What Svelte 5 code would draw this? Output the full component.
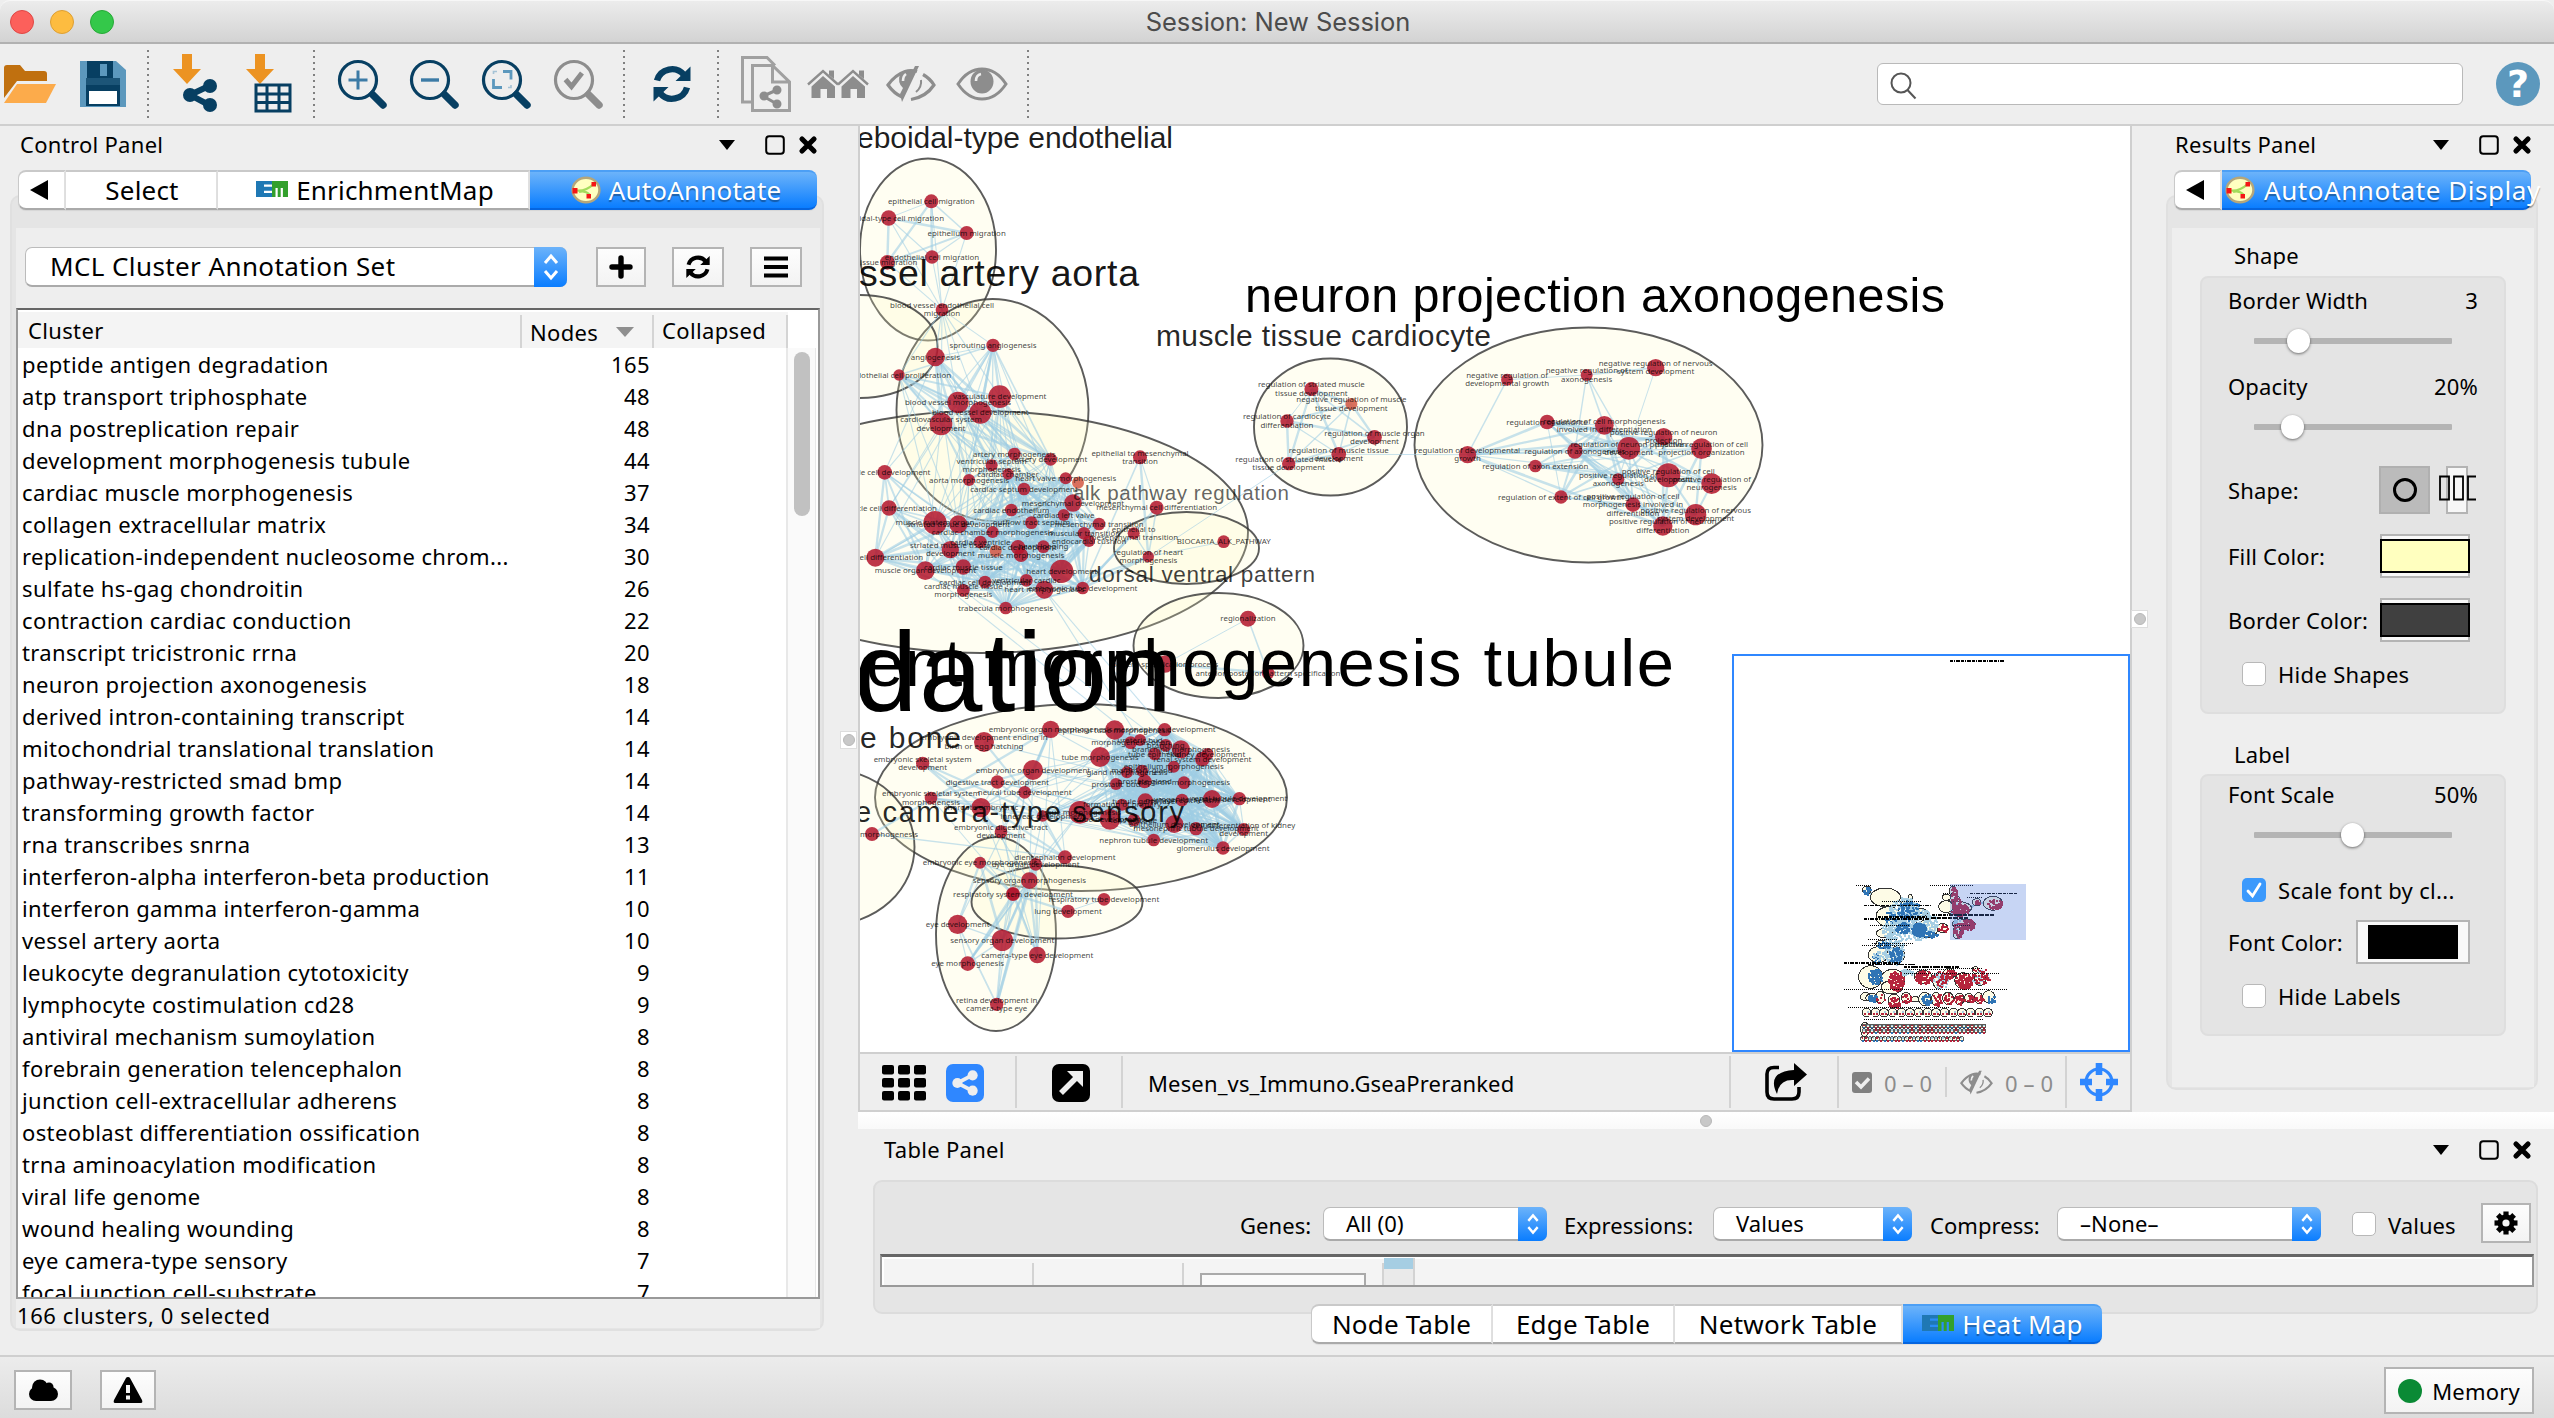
<script>
  const clusters = [
    ['peptide antigen degradation', 165], ['atp transport triphosphate', 48], ['dna postreplication repair', 48],
    ['development morphogenesis tubule', 44], ['cardiac muscle morphogenesis', 37], ['collagen extracellular matrix', 34],
    ['replication-independent nucleosome chrom...', 30], ['sulfate hs-gag chondroitin', 26], ['contraction cardiac conduction', 22],
    ['transcript tricistronic rrna', 20], ['neuron projection axonogenesis', 18], ['derived intron-containing transcript', 14],
    ['mitochondrial translational translation', 14], ['pathway-restricted smad bmp', 14], ['transforming growth factor', 14],
    ['rna transcribes snrna', 13], ['interferon-alpha interferon-beta production', 11], ['interferon gamma interferon-gamma', 10],
    ['vessel artery aorta', 10], ['leukocyte degranulation cytotoxicity', 9], ['lymphocyte costimulation cd28', 9],
    ['antiviral mechanism sumoylation', 8], ['forebrain generation telencephalon', 8], ['junction cell-extracellular adherens', 8],
    ['osteoblast differentiation ossification', 8], ['trna aminoacylation modification', 8], ['viral life genome', 8],
    ['wound healing wounding', 8], ['eye camera-type sensory', 7], ['focal junction cell-substrate', 7]
  ];

  const tools = [
    ['gap', 4], ['folder', 52], ['gap', 20], ['save', 54], ['gap', 16], ['sep', 4], ['gap', 20], ['network', 52], ['gap', 20], ['table', 53],
    ['gap', 17], ['sep', 4], ['gap', 10], ['zoomin', 72], ['zoomout', 72], ['zoomfit', 72], ['zoomsel', 72], ['gap', 8], ['sep', 4],
    ['gap', 2], ['refresh', 88], ['sep', 4], ['gap', 10], ['docs', 72], ['homes', 72], ['hide', 73], ['show', 70], ['gap', 9], ['sep', 4]
  ];

  // Node lists are drawn on tiles: origin plus a per-axis scale.
  const place = (ox, oy, sx, sy, list) => list.map(([x, y, r, ...t]) => ({ x: ox + x / sx, y: oy + y / sy, r: r / 3, t }));
  const tileA = (l) => place(850, 120, 3, 3, l);
  const tileB = (l) => place(850, 580, 3, 3, l);
  const tileC = (l) => place(1130, 240, 2.376, 3, l);

  const migration = tileA([
    [244, 244, 21, 'epithelial cell migration'], [116, 294, 23, 'ameboidal-type cell migration'], [350, 339, 21, 'epithelium migration'],
    [246, 411, 20, 'endothelial cell migration'], [112, 427, 22, 'tissue migration'], [276, 569, 19, 'blood vessel endothelial cell', 'migration']
  ]);
  const vessel = tileA([
    [429, 676, 20, 'sprouting angiogenesis'], [256, 711, 28, 'angiogenesis'], [147, 765, 17, 'endothelial cell proliferation'],
    [324, 847, 32, 'blood vessel morphogenesis'], [449, 830, 34, 'vasculature development'], [391, 878, 33, 'blood vessel development'],
    [273, 912, 34, 'cardiovascular system', 'development'], [493, 1002, 19, 'artery morphogenesis'], [602, 1018, 19, 'artery development'],
    [425, 1036, 18, 'ventricular septum', 'morphogenesis'], [357, 1080, 18, 'aorta morphogenesis']
  ]);
  const heart = tileA([
    [474, 1062, 17, 'cardiac chamber'], [647, 1075, 18, 'heart valve morphogenesis'], [522, 1107, 19, 'cardiac septum development'],
    [669, 1149, 26, 'mesenchymal development'], [484, 1170, 19, 'cardiac endothelium'], [544, 1208, 19, 'outflow tract septum'],
    [641, 1185, 18, 'cardiac left valve'], [747, 1212, 19, 'mesenchymal transition'], [702, 1240, 19, 'muscular transition'],
    [717, 1263, 18, 'endocardial cushion'], [255, 1208, 35, 'muscle system organ'], [325, 1213, 27, 'striated tissue development'],
    [428, 1236, 18, 'cardiac chamber morphogenesis'], [104, 1057, 22, 'muscle cell development'], [117, 1164, 23, 'muscle cell differentiation'],
    [76, 1313, 27, 'muscle cell differentiation'], [391, 1266, 19, 'cardiac ventricle'], [301, 1289, 26, 'striated muscle tissue', 'development'],
    [504, 1282, 22, 'cardiac development'], [580, 1280, 19, 'heart looping'], [513, 1305, 21, 'muscle morphogenesis'],
    [340, 1341, 23, 'cardiac muscle tissue'], [226, 1352, 28, 'muscle organ development'], [635, 1354, 35, 'heart development'],
    [405, 1386, 19, 'cardiac cell development'], [340, 1411, 19, 'cardiac muscle tissue', 'morphogenesis'], [529, 1381, 19, 'ventricular cardiac'],
    [583, 1409, 27, 'heart morphogenesis'], [698, 1404, 19, 'embryonic tube development'], [467, 1464, 19, 'trabecula morphogenesis'],
    [870, 1012, 21, 'epithelial to mesenchymal', 'transition'], [920, 1163, 21, 'mesenchymal cell differentiation'],
    [851, 1240, 18, 'epithelial to', 'mesenchymal transition'], [895, 1310, 17, 'regulation of heart', 'morphogenesis']
  ]);
  const warm = tileA([[684, 1088, 18], [437, 1293, 18]]);
  const alk = tileA([[1121, 1265, 19, 'BIOCARTA_ALK_PATHWAY']]);
  const pattern = tileB([[1194, 116, 24, 'regionalization'], [945, 252, 26, 'pattern specification process'], [1254, 279, 19, 'anterior/posterior pattern specification']]);
  const embryo = tileB([
    [602, 448, 26, 'embryonic organ morphogenesis'], [402, 486, 30, 'embryonic development ending in', 'birth or egg hatching'],
    [218, 550, 20, 'embryonic skeletal system', 'development'], [549, 570, 30, 'embryonic organ development'], [442, 606, 20, 'digestive tract development'],
    [524, 637, 19, 'neural tube development'], [243, 654, 19, 'embryonic skeletal system', 'morphogenesis'], [393, 683, 29, 'chordate embryonic'],
    [453, 755, 19, 'embryonic digestive tract', 'development'], [578, 708, 17, 'inner ear development'], [690, 697, 34, 'tissue morphogenesis'],
    [645, 832, 21, 'diencephalon development'], [66, 762, 21, 'cartilage morphogenesis']
  ]);
  const kidney = tileB([
    [794, 450, 29, 'epithelial tube morphogenesis'], [944, 449, 20, 'mesonephros development'], [842, 488, 19, 'morphogenesis of an'],
    [870, 480, 18, 'ureteric bud'], [947, 496, 19, 'branching'], [993, 508, 27, 'branching morphogenesis'], [914, 522, 19, 'tube epithelial'],
    [750, 531, 30, 'tube morphogenesis'], [1057, 537, 22, 'renal system development'], [1073, 522, 18, 'kidney development'],
    [971, 560, 18, 'epithelium morphogenesis'], [876, 572, 18, 'mammary gland'], [831, 577, 18, 'gland morphogenesis'], [884, 604, 21, 'prostate gland'],
    [798, 612, 18, 'prostatic bud'], [1002, 608, 19, 'nephron morphogenesis'], [816, 674, 18, 'formation of primary'], [886, 664, 24, 'tubule germ layer'],
    [996, 660, 19, 'nephron epithelium'], [1086, 657, 27, 'urogenital system development'], [1168, 656, 20, 'renal tubule development'],
    [780, 718, 31, 'tube development'], [852, 720, 19, 'lens placode'], [973, 732, 27, 'epithelium development'], [1038, 746, 20, 'mesonephric tubule development'],
    [1181, 748, 19, 'cell differentiation of kidney', 'development'], [911, 780, 19, 'nephron tubule development'], [1119, 804, 20, 'glomerulus development']
  ]);
  const eye = tileB([
    [390, 848, 18, 'embryonic eye morphogenesis'], [557, 853, 19, 'eye organ development'], [538, 902, 25, 'sensory organ morphogenesis'],
    [489, 942, 21, 'respiratory system development'], [323, 1033, 29, 'eye development'], [457, 1081, 32, 'sensory organ development'],
    [562, 1125, 25, 'camera-type eye development'], [353, 1151, 22, 'eye morphogenesis'], [440, 1273, 20, 'retina development in', 'camera-type eye']
  ]);
  const lung = tileB([[762, 958, 19, 'respiratory tube development'], [654, 994, 20, 'lung development'], [489, 942, 19]]);
  const muscle = tileC([
    [431, 447, 21, 'regulation of striated muscle', 'tissue development'], [373, 543, 20, 'regulation of cardiocyte', 'differentiation'],
    [581, 592, 22, 'regulation of muscle organ', 'development'], [496, 643, 22, 'regulation of muscle tissue', 'development'],
    [377, 671, 20, 'regulation of striated muscle', 'tissue development']
  ]);
  const warm2 = tileC([[526, 492, 18, 'negative regulation of muscle', 'tissue development']]);
  const neuronSparse = tileC([
    [896, 419, 18, 'negative regulation of', 'developmental growth'], [1085, 405, 18, 'negative regulation of', 'axonogenesis'],
    [1249, 383, 26, 'negative regulation of nervous', 'system development']
  ]);
  const neuron = tileC([
    [991, 546, 22, 'regulation of dendrite'], [1127, 556, 28, 'regulation of cell morphogenesis', 'involved in differentiation'], [1268, 590, 26, 'positive regulation of neuron', 'projection'],
    [1185, 625, 34, 'regulation of neuron projection', 'development'], [1358, 626, 31, 'positive regulation of cell', 'projection organization'],
    [802, 644, 26, 'regulation of developmental', 'growth'], [1057, 633, 23, 'regulation of axonogenesis'], [963, 678, 19, 'regulation of axon extension'],
    [1279, 706, 36, 'positive regulation of cell', 'development'], [1160, 718, 18, 'positive regulation of', 'axonogenesis'], [1382, 731, 31, 'positive regulation of', 'neurogenesis'],
    [1024, 771, 20, 'regulation of extent of cell growth'], [1195, 794, 22, 'positive regulation of cell', 'morphogenesis involved in', 'differentiation'],
    [1344, 824, 32, 'positive regulation of nervous', 'system development'], [1266, 858, 29, 'positive regulation of neuron', 'differentiation']
  ]);

  const noise = (a, b) => { const v = Math.sin(a * 127.1 + b * 311.7) * 43758.5453; return v - Math.floor(v); };
  function mesh(nodes, density, reach = 999) {
    const out = [];
    nodes.forEach((p, i) => nodes.slice(i + 1).forEach((q, j) => {
      const d = Math.hypot(p.x - q.x, p.y - q.y);
      if (d < reach && noise(i + 1, j + 1) < density) out.push({ p, q, w: 1 + noise(j, i) * 1.8 });
    }));
    return out;
  }
  function bridge(a, b, density) {
    const out = [];
    a.forEach((p, i) => b.forEach((q, j) => { if (noise(i + 3, j + 7) < density) out.push({ p, q, w: 1.1 }); }));
    return out;
  }
  const edges = [
    ...mesh(migration.slice(0, 5), 1), ...bridge([migration[5]], [...migration.slice(0, 5), ...vessel.slice(0, 7)], 1),
    ...mesh(vessel, 0.75), ...bridge(vessel, heart.slice(0, 30), 0.17), ...mesh(heart.slice(0, 30), 0.85, 120), ...mesh(heart.slice(28), 0.7),
    ...mesh(pattern, 1), ...mesh(embryo, 0.4), ...mesh(kidney, 0.95), ...bridge(embryo.slice(9, 11), kidney, 0.8), ...bridge(embryo.slice(0, 8), kidney, 0.07),
    ...mesh(eye, 0.7), ...mesh(lung, 1), ...bridge(embryo, eye, 0.12), ...bridge(heart.slice(22, 29), kidney.slice(0, 12), 0.06),
    ...mesh([...muscle, ...warm2], 0.9), ...mesh(neuron, 0.6), { p: muscle[3], q: neuron[5], w: 1 }, { p: muscle[4], q: heart[33], w: 1 },
    { p: alk[0], q: heart[33], w: 1 }, { p: neuronSparse[0], q: neuronSparse[1], w: 1 }, { p: neuronSparse[1], q: neuronSparse[2], w: 1.6 },
    { p: neuronSparse[0], q: neuron[5], w: 1.4 }, { p: neuronSparse[1], q: neuron[1], w: 1.6 }, { p: neuronSparse[1], q: neuron[6], w: 1.4 },
    { p: neuronSparse[1], q: neuron[3], w: 1.4 }, { p: neuronSparse[2], q: neuron[3], w: 1 }
  ];
  const red = [...migration, ...vessel, ...heart, ...alk, ...pattern, ...embryo, ...kidney, ...eye, ...lung, ...muscle, ...neuronSparse, ...neuron];
  const orange = [...warm, ...warm2];

  const rings = [
    [928, 249.5, 68, 91], [992.5, 410, 96, 111], [860, 346.5, 77.5, 51.5], [980.5, 532, 267.5, 121], [1186.5, 548, 72.5, 36],
    [1218.5, 645.5, 85, 52.5], [1081, 797.5, 206, 93.5], [996, 934, 60, 97], [1057, 902, 85.5, 36.5], [830, 847, 84.5, 77.5],
    [1330.5, 427, 76.5, 68.5], [1588.5, 445, 174, 117.5]
  ];
  // Caption: text, x, baseline, size, drawn length, ink strength
  const captions = [
    ['eboidal-type endothelial', 857, 148, 30, 316, 0.88], ['ssel artery aorta', 859, 286, 37.5, 280, 0.92], ['neuron projection axonogenesis', 1245, 312, 48.5, 700, 1],
    ['muscle tissue cardiocyte', 1156, 346, 30, 335, 0.85], ['alk pathway regulation', 1073, 500, 20.5, 216, 0.62], ['dorsal ventral pattern', 1089, 582, 22.5, 226, 0.75],
    ['dation', 854, 711, 114, 318, 1], ['ent morphogenesis tubule', 866, 686, 67, 808, 1], ['e bone', 860, 748, 30, 101, 0.85], ['e camera-type sensory', 855, 822, 29, 329, 0.85]
  ];

  // Overview: blobs are [cx, cy, rx, ry, colour, count]
  const blue = '#2f74b5', crimson = '#b5243c', sky = '#a6cee3';
  const blobs = [
    [440, 753, 12, 14, blue, 14], [550, 815, 45, 45, sky, 140], [580, 850, 70, 50, sky, 260], [565, 810, 36, 30, blue, 60], [510, 830, 20, 16, blue, 18],
    [595, 867, 22, 20, blue, 130], [545, 862, 22, 18, blue, 50], [630, 882, 22, 10, blue, 20], [505, 870, 20, 25, sky, 50], [520, 925, 30, 50, sky, 120],
    [490, 913, 20, 12, blue, 26], [525, 945, 20, 25, blue, 60], [470, 952, 18, 14, blue, 14], [480, 945, 25, 14, sky, 22],
    [464, 1008, 22, 22, blue, 70], [527, 1020, 24, 30, crimson, 80], [560, 995, 22, 8, sky, 26], [610, 1010, 28, 20, crimson, 70], [660, 1020, 22, 26, sky, 36],
    [660, 1015, 20, 24, crimson, 22], [688, 1000, 18, 14, crimson, 34], [730, 1022, 24, 24, crimson, 80], [780, 1010, 26, 20, sky, 22], [780, 1005, 30, 26, crimson, 30],
    [457, 1073, 15, 10, blue, 30], [480, 1075, 12, 14, crimson, 6], [522, 1087, 18, 18, crimson, 24], [558, 1075, 15, 14, crimson, 14], [618, 1077, 15, 18, blue, 26],
    [650, 1077, 15, 18, crimson, 18], [684, 1075, 15, 16, crimson, 16], [718, 1077, 15, 16, crimson, 18], [750, 1075, 12, 12, crimson, 14], [777, 1073, 13, 14, crimson, 14], [812, 1076, 12, 14, blue, 12],
    [705, 830, 14, 40, sky, 20], [700, 755, 10, 16, crimson, 14], [705, 785, 16, 20, crimson, 30], [718, 808, 26, 18, crimson, 90], [770, 788, 10, 10, crimson, 8], [822, 790, 24, 16, crimson, 34],
    [742, 852, 20, 16, crimson, 60], [715, 870, 18, 24, crimson, 34], [668, 864, 14, 12, crimson, 12]
  ];
  const specks = blobs.flatMap(([cx, cy, rx, ry, c, n], b) => Array.from({ length: Math.round(n * 1.5) }, (_, i) => {
    const a = noise(i, b) * 6.283, k = Math.sqrt(noise(b + 50, i));
    return [Math.round((cx + Math.cos(a) * rx * k) / 3) * 3, Math.round((cy + Math.sin(a) * ry * k) / 3) * 3, c];
  }));
  const row = (y, x0, x1, step) => Array.from({ length: Math.floor((x1 - x0) / step) + 1 }, (_, i) => [x0 + i * step, y]);
  const mids = row(1118, 440, 806, 26);
  const smalls = [...row(1158, 432, 796, 12), ...row(1172, 432, 796, 12), ...row(1196, 428, 728, 11)];
  const ovals = [
    [440, 750, 13, 12], [496, 772, 45, 28], [571, 780, 7, 16], [551, 785, 8, 10], [505, 830, 37, 30], [600, 818, 22, 14], [615, 868, 38, 26], [493, 880, 24, 14],
    [485, 912, 18, 12], [475, 944, 30, 24], [527, 945, 27, 25], [452, 1011, 36, 34], [518, 1022, 37, 34], [515, 1042, 32, 20], [609, 1010, 26, 20], [656, 1022, 18, 24], [688, 1000, 18, 16],
    [730, 1022, 26, 24], [780, 1016, 18, 20], [766, 990, 9, 10], [437, 1070, 16, 12], [457, 1073, 20, 12], [481, 1072, 14, 18], [522, 1082, 18, 20], [558, 1073, 14, 16], [586, 1078, 12, 8],
    [614, 1077, 18, 20], [648, 1077, 14, 20], [684, 1075, 16, 18], [718, 1077, 14, 18], [746, 1074, 12, 14], [776, 1074, 13, 16], [806, 1070, 18, 18], [434, 1168, 12, 22],
    [699, 754, 11, 15], [704, 784, 17, 20], [679, 772, 12, 9], [712, 804, 42, 20], [668, 864, 16, 14], [770, 787, 13, 11], [819, 790, 29, 21], [730, 852, 34, 15], [710, 878, 11, 18], [678, 800, 22, 18]
  ];
  const dotted = [
    [408, 736, 453], [630, 736, 760], [486, 784, 604], [668, 760, 700], [740, 772, 790], [450, 856, 566], [700, 856, 750], [444, 898, 530], [456, 910, 580], [426, 916, 560], [552, 1000, 838], [372, 1048, 862],
    [384, 1102, 690], [432, 1138, 790], [700, 985, 790], [560, 988, 700]
  ];
  const heavy = [[432, 796, 632, 3], [432, 837, 630, 6], [474, 831, 620, 4], [636, 824, 710, 5], [632, 834, 745, 5], [710, 825, 822, 5], [750, 759, 890, 3], [372, 968, 540, 5], [445, 974, 585, 4], [553, 981, 716, 4]];
</script>

{#snippet dock()}
  <span class="dock">
    <svg width="16" height="10" viewBox="0 0 16 10"><path d="M0 0h16l-8 10z" /></svg>
    <svg width="20" height="20" viewBox="0 0 20 20"><rect x="1.2" y="1.2" width="17.6" height="17.6" rx="3" fill="none" stroke="#000" stroke-width="2" /></svg>
    <svg width="20" height="20" viewBox="0 0 20 20"><path d="M4 4l12 12M16 4L4 16" stroke="#000" stroke-width="5.2" stroke-linecap="round" /></svg>
  </span>
{/snippet}

{#snippet aaIcon()}
  <svg class="aa" width="30" height="28" viewBox="0 0 30 28">
    <ellipse cx="15" cy="14" rx="13.4" ry="12.2" fill="#ffffc0" stroke="#b5a67a" stroke-width="2.4" />
    <path d="M5 14.500q10 1 17-6M8 16q6-2 11 3" fill="none" stroke="#a4dc5c" stroke-width="2.2" />
    <path d="M1.500 12h5v5.500h-5zM20.500 6h4.500v4.500h-4.500zM15.500 18h4.500v4.500h-4.500z" fill="#f51616" />
  </svg>
{/snippet}

{#snippet emIcon(on)}
  <svg class="em" width="32" height="16" viewBox="0 0 32 16">
    <path d="M0 0h16v16H0z" fill="#1f78b4" /><path d="M16 0h16v16H16z" fill="#33a02c" />
    <path d="M8 4.600h8M8 10.800h8M20.600 16V7M25.800 16V7" stroke={on ? '#2a8df5' : '#fff'} stroke-width="2.200" />
  </svg>
{/snippet}

{#snippet sync(w, c)}
  <svg width={w} height={w} viewBox="0 0 38 38" fill="none" stroke={c} stroke-width="6.400">
    <path d="M4 15.500A15.500 15.500 0 0 1 31 10" /><path d="M34 22.500A15.500 15.500 0 0 1 7 28" />
    <path d="M37.500 1.500V16H22.500zM.5 36.500V22H15.500z" fill={c} stroke="none" />
  </svg>
{/snippet}

{#snippet eyeOff(w)}
  <svg width={w} height={w * 0.76} viewBox="0 0 50 38" fill="none" stroke="#8d8d8d" stroke-width="3.200">
    <path d="M31 6.500Q25 4.500 19 6.500Q9 10 2 20Q8 28.500 16 32M37 9.500Q44 13.500 48 20Q40 32 25 34.500" />
    <path d="M33 1L16 37l-2-8 3-6Q11 18 14 9q4-4 13-4l2-4z" fill="#8d8d8d" stroke="none" /><path d="M35 15q1 7-5 12" stroke-width="2" /><path d="M20 9q-3 2-3 7" stroke="#eee" stroke-width="2.600" />
  </svg>
{/snippet}

{#snippet share(w, c)}
  <svg width={w} height={w} viewBox="0 0 34 34" fill={c} stroke={c}><path d="M28 6L7 17l21 11" fill="none" stroke-width="5" /><circle cx="27" cy="7" r="6.600" stroke="none" /><circle cx="7" cy="17" r="6.600" stroke="none" /><circle cx="27" cy="27" r="6.600" stroke="none" /></svg>
{/snippet}

{#snippet lens(c, inner, kind)}
  <svg width="50" height="50" viewBox="0 0 50 50" fill="none">
    <circle cx="21" cy="21" r="18.500" stroke={c} stroke-width="3.200" /><path d="M36 36l10 10" stroke={c} stroke-width="7.400" stroke-linecap="round" /><path d="M33 33l4 4" stroke={c} stroke-width="4" />
    {#if kind === 'in'}<path d="M21 11.500v19M11.500 21h19" stroke={inner} stroke-width="3" />{/if}
    {#if kind === 'out'}<path d="M12 21h18" stroke={inner} stroke-width="3.400" />{/if}
    {#if kind === 'fit'}<path d="M22 12.500h8v8M12.500 20v8.500H21" stroke={inner} stroke-width="2.800" /><path d="M16 12.500h-3.500V15M30 26v2.500h-3" stroke={inner} stroke-width="1.600" opacity=".5" />{/if}
    {#if kind === 'sel'}<path d="M12.500 20.500l6 7L29 14" stroke={inner} stroke-width="5" />{/if}
  </svg>
{/snippet}

{#snippet combo(text, cls)}
  <div class="combo {cls}"><span>{text}</span><i><svg width="16" height="26" viewBox="0 0 16 26" fill="none" stroke="#fff" stroke-width="3"><path d="M2 9l6-7 6 7M2 17l6 7 6-7" /></svg></i></div>
{/snippet}

{#snippet slider(pos)}
  <div class="slider"><b style:left="{pos}px"></b></div>
{/snippet}

<div class="window">
  <header><span class="light r"></span><span class="light y"></span><span class="light g"></span><h1>Session: New Session</h1></header>

  <div class="toolbar">
    {#each tools as [kind, w]}
      <span class="tool" style:width="{w}px">
        {#if kind === 'sep'}<span class="dots"></span>
        {:else if kind === 'folder'}
          <svg width="52" height="40" viewBox="0 0 52 40"><path d="M0 34V4q0-3 3-3h13l5 6h19q3 0 3 3v7H13z" fill="#c0700f" /><path d="M0 39l13-19h39L42 39z" fill="#fcab4b" /></svg>
        {:else if kind === 'save'}
          <svg width="46" height="46" viewBox="0 0 46 46"><path d="M0 0h36l10 9v37H0z" fill="#5c98bd" /><path d="M7 0h26v17H7zM6 24h34v21H6z" fill="#073f62" /><path d="M20 3h7v12h-7z" fill="#5c98bd" /><path d="M0 17h46v7H0z" fill="#073f62" opacity=".75" /><path d="M0 17h6v7H0zM40 17h6v7h-6z" fill="#5c98bd" /><path d="M9 30h28v13H9z" fill="#fff" /></svg>
        {:else if kind === 'network' || kind === 'table'}
          <svg width="46" height="60" viewBox="0 0 46 60"><path d="M9 0h10v15h9L14 30 0 15h9z" fill="#ec9322" />
            {#if kind === 'network'}<g fill="#073f62" stroke="#073f62"><path d="M38 31L17 41l21 11" fill="none" stroke-width="6" /><circle cx="37" cy="32" r="7" stroke="none" /><circle cx="17" cy="41" r="7" stroke="none" /><circle cx="37" cy="51" r="7" stroke="none" /></g>
            {:else}<path d="M10 31h34v26H10zM10 40h34M10 48.500h34M21 31v26M33 31v26" fill="none" stroke="#073f62" stroke-width="3" />{/if}
          </svg>
        {:else if kind === 'zoomin'}{@render lens('#073f62', '#3c7ba6', 'in')}
        {:else if kind === 'zoomout'}{@render lens('#073f62', '#3c7ba6', 'out')}
        {:else if kind === 'zoomfit'}{@render lens('#073f62', '#5c98bd', 'fit')}
        {:else if kind === 'zoomsel'}{@render lens('#8d8d8d', '#8d8d8d', 'sel')}
        {:else if kind === 'refresh'}{@render sync(38, '#073f62')}
        {:else if kind === 'docs'}
          <svg width="50" height="56" viewBox="0 0 50 56" fill="none" stroke="#a0a0a0" stroke-width="3"><path d="M11 46H1.500V1.500H26l8 8" /><path d="M11.500 9.500h20L48.500 26v28.500h-37zM31.500 9.500V26h17" /><g stroke="#8d8d8d" fill="#8d8d8d"><path d="M36 34l-14 6 14 8" fill="none" /><circle cx="36" cy="34" r="3" /><circle cx="23" cy="40" r="3" /><circle cx="36" cy="48" r="3" /></g></svg>
        {:else if kind === 'homes'}
          <svg width="62" height="30" viewBox="0 0 62 30" fill="#8d8d8d">
            {#each [0, 30] as x}<g transform="translate({x} 0)"><path d="M4.500 17.500L16 7l12 10.500V29h-8v-9h-6.500v9h-9zM22 1.500h5V10l-5-4z" /><path d="M1 15.500L16 2l15 13.500" fill="none" stroke="#8d8d8d" stroke-width="2.400" /></g>{/each}
          </svg>
        {:else if kind === 'hide'}{@render eyeOff(50)}
        {:else if kind === 'show'}
          <svg width="52" height="34" viewBox="0 0 52 34" fill="none" stroke="#8d8d8d" stroke-width="3"><path d="M2 17Q12 2 26 2t24 15Q40 32 26 32T2 17z" /><ellipse cx="26" cy="14.500" rx="11.500" ry="12" fill="#8d8d8d" stroke="none" /><path d="M20 14q0-6 5-7" stroke="#eee" stroke-width="2.600" /></svg>
        {/if}
      </span>
    {/each}
    <div class="search"><svg width="28" height="28" viewBox="0 0 28 28" fill="none" stroke="#555" stroke-width="2"><circle cx="11" cy="11" r="9.500" /><path d="M17.500 18l8 8.500" /></svg></div>
    <span class="help">?</span>
  </div>

  <main>
    <section class="control">
      <div class="ptitle">Control Panel{@render dock()}</div>
      <div class="frame">
        <div class="tabs">
          <span class="back"><svg width="18" height="20" viewBox="0 0 18 20"><path d="M18 0v20L0 10z" /></svg></span>
          <span class="t1">Select</span><span class="t2">{@render emIcon(false)}EnrichmentMap</span><span class="t3 on">{@render aaIcon()}AutoAnnotate</span>
        </div>
        <div class="content">
          <div class="picker">
            {@render combo('MCL Cluster Annotation Set', 'big')}
            <button class="b1"><svg width="22" height="22" viewBox="0 0 22 22"><path d="M11 2v18M2 11h18" stroke="#000" stroke-width="5.400" stroke-linecap="round" /></svg></button>
            <button class="b2">{@render sync(24, '#000')}</button>
            <button class="b3"><svg width="24" height="22" viewBox="0 0 24 22"><path d="M0 2.500h24M0 11h24M0 19.500h24" stroke="#000" stroke-width="3.800" /></svg></button>
          </div>
          <div class="grid">
            <div class="ghead"><span class="c1">Cluster</span><span class="c2">Nodes<svg width="18" height="10" viewBox="0 0 18 10"><path d="M0 0h18L9 10z" fill="#8f8f8f" /></svg></span><span class="c3">Collapsed</span></div>
            <div class="gbody">
              <div class="rows">{#each clusters as [name, n]}<div class="row"><span>{name}</span><em>{n}</em></div>{/each}</div>
              <div class="track"><div class="thumb"></div></div>
            </div>
          </div>
          <div class="status">166 clusters, 0 selected</div>
        </div>
      </div>
      <span class="grip left"><i></i></span>
    </section>

    <section class="work">
      <div class="upper">
        <div class="view">
          <div class="canvas">
            <svg width="1271" height="926" viewBox="860 126 1271 926">
              {#each rings as [cx, cy, rx, ry]}<ellipse {cx} {cy} {rx} {ry} fill="#fefbc0" fill-opacity=".2" stroke="#333" stroke-width="1.900" stroke-opacity=".8" />{/each}
              <g stroke="#9fcde4" stroke-opacity=".58">{#each edges as { p, q, w }}<line x1={p.x} y1={p.y} x2={q.x} y2={q.y} stroke-width={w} />{/each}</g>
              <g fill="#b3162c" fill-opacity=".86">{#each red as n}<circle cx={n.x} cy={n.y} r={n.r} />{/each}</g>
              <g fill="#d6604d" fill-opacity=".9">{#each orange as n}<circle cx={n.x} cy={n.y} r={n.r} />{/each}</g>
              <g class="tiny">{#each [...red, ...orange] as n}{#each n.t as line, i}<text x={n.x} y={n.y + 2.5 + (i - (n.t.length - 1) / 2) * 8.5}>{line}</text>{/each}{/each}</g>
              <g class="caps">{#each captions as [t, x, y, size, len, ink]}<text {x} {y} font-size={size} textLength={len} fill-opacity={ink}>{t}</text>{/each}</g>
            </svg>
            <div class="overview">
              <svg width="394" height="394" viewBox="42 48 1182 1182" shape-rendering="crispEdges">
                <path d="M440 755l120 50M770 790l55-5M740 810l30-20" stroke={sky} stroke-width="7" />
                {#each ovals as [cx, cy, rx, ry]}<ellipse {cx} {cy} {rx} {ry} fill="#fdfbe6" stroke="#333" stroke-width="3" />{/each}
                {#each specks as [x, y, c]}<rect {x} {y} width="6" height="6" fill={c} />{/each}
                {#each mids as [x, y]}<circle cx={x} cy={y} r="13" fill="#fdfbe6" stroke="#333" stroke-width="3" /><rect x={x - 8} y={y} width="7" height="7" fill={crimson} /><rect x={x + 1} y={y - 6} width="6" height="6" fill={sky} /><rect x={x + 3} y={y + 2} width="6" height="6" fill={crimson} />{/each}
                {#each smalls as [x, y], i}<circle cx={x} cy={y} r="6" fill="#fdfbe6" stroke="#333" stroke-width="3" stroke-opacity=".8" /><rect x={x - 3} y={y + 4} width="6" height="5" fill={noise(i, 4) < 0.3 ? blue : crimson} /><rect x={x - 3} y={y - 4} width="5" height="5" fill={noise(i, 9) < 0.4 ? crimson : sky} />{/each}
                <g stroke="#000" stroke-width="3" stroke-dasharray="3 3">{#each dotted as [a, y, b]}<path d="M{a} {y}H{b}" />{/each}</g>
                <g stroke="#000" stroke-dasharray="9 2 5 3 12 2">{#each heavy as [a, y, b, w]}<path d="M{a} {y}H{b}" stroke-width={w} />{/each}<path d="M690 63H852" stroke-width="7" /></g>
                <rect x="690" y="732" width="227" height="167" fill="#4a78dc" fill-opacity=".31" />
              </svg>
            </div>
          </div>
          <div class="vbar">
            <span class="s1">
              <svg width="44" height="36" viewBox="0 0 44 36">{#each [0, 16, 32] as x}{#each [0, 13, 26] as y}<rect {x} {y} width="12" height="9.500" rx="2" />{/each}{/each}</svg>
              <b class="tile net">{@render share(26, '#eee')}</b>
            </span>
            <span class="s2"><b class="tile"><svg width="26" height="26" viewBox="0 0 26 26"><path d="M3 23L20 6" stroke="#eee" stroke-width="5.500" /><path d="M9 1h16v16z" fill="#eee" /></svg></b></span>
            <span class="s3">Mesen_vs_Immuno.GseaPreranked</span>
            <span class="s4"><svg width="42" height="38" viewBox="0 0 42 38"><path d="M14 4.500H9Q2 4.500 2 11v18q0 7 7 7h18q7 0 7-7v-5" fill="none" stroke="#000" stroke-width="3.600" /><path d="M29 0l13 11.500L29 23v-6q-15-1-17 14Q1 9 29 7z" /></svg></span>
            <span class="s5"><svg width="20" height="21" viewBox="0 0 20 21"><rect width="20" height="21" rx="3" fill="#808080" /><path d="M4 10l5 5 8-8.500" fill="none" stroke="#eee" stroke-width="3.600" /></svg>0 – 0</span>
            <span class="s6">{@render eyeOff(33)}0 – 0</span>
            <span class="s7"><svg width="38" height="38" viewBox="0 0 38 38" fill="none" stroke="#2f87ff"><circle cx="19" cy="19" r="13" stroke-width="3.200" /><path d="M19 0v12M19 26v12M0 19h12M26 19h12" stroke-width="6.600" /></svg></span>
          </div>
        </div>

        <aside>
          <span class="grip right"><i></i></span>
          <div class="ptitle">Results Panel{@render dock()}</div>
          <div class="frame">
            <div class="tabs">
              <span class="back"><svg width="18" height="20" viewBox="0 0 18 20"><path d="M18 0v20L0 10z" /></svg></span>
              <span class="t4 on">{@render aaIcon()}AutoAnnotate Display</span>
            </div>
            <div class="content">
              <h2>Shape</h2>
              <div class="group shape">
                <p class="pair"><span>Border Width</span><span>3</span></p>
                {@render slider(45)}
                <p class="pair"><span>Opacity</span><span>20%</span></p>
                {@render slider(39)}
                <p class="line kinds"><span>Shape:</span>
                  <b class="oval"><svg width="26" height="26" viewBox="0 0 26 26"><circle cx="13" cy="13" r="10.500" fill="none" stroke="#000" stroke-width="3" /></svg></b>
                  <b class="more"><svg width="40" height="48" viewBox="0 0 40 48"><rect x="9" y="1" width="20" height="46" fill="#f7f7f7" stroke="#b4b4b4" stroke-width="2" /><path d="M2 10.500h9v23H2zM16 10.500h9v23h-9zM38 10.500h-8v23h8" fill="none" stroke="#000" stroke-width="1.800" /></svg></b></p>
                <p class="line"><span>Fill Color:</span><b class="swatch"><i class="cream"></i></b></p>
                <p class="line second"><span>Border Color:</span><b class="swatch"><i class="slate"></i></b></p>
                <p class="check"><i class="box"></i>Hide Shapes</p>
              </div>
              <h2 class="lab">Label</h2>
              <div class="group label">
                <p class="pair"><span>Font Scale</span><span>50%</span></p>
                {@render slider(99)}
                <p class="check top"><i class="box ticked"><svg width="24" height="24" viewBox="0 0 24 24"><path d="M6 13l4.500 5L18 6" fill="none" stroke="#fff" stroke-width="2.800" stroke-linecap="round" /></svg></i>Scale font by cl...</p>
                <p class="line font"><span>Font Color:</span><b class="swatch wide"><i class="ink"></i></b></p>
                <p class="check last"><i class="box"></i>Hide Labels</p>
              </div>
            </div>
          </div>
        </aside>
      </div>

      <div class="divider"><i></i></div>

      <div class="tables">
        <div class="ptitle">Table Panel{@render dock()}</div>
        <div class="tframe">
          <div class="opts">
            <span class="l1">Genes:</span>{@render combo('All (0)', 'w1')}
            <span class="l2">Expressions:</span>{@render combo('Values', 'w2')}
            <span class="l3">Compress:</span>{@render combo('–None–', 'w3')}
            <i class="box"></i><span class="l4">Values</span>
            <button><svg width="24" height="24" viewBox="-12 -12 24 24">{#each [0, 45, 90, 135] as a}<rect x="-2.600" y="-11.500" width="5.200" height="23" transform="rotate({a})" />{/each}<circle r="8.500" /><circle r="3.600" fill="#f6f6f6" /></svg></button>
          </div>
          <div class="heat"><span class="h1"></span><span class="h2"></span><span class="h3"><i></i></span><span class="h4"></span></div>
        </div>
        <div class="tabs bottom">
          <span class="n1">Node Table</span><span class="n1">Edge Table</span><span class="n3">Network Table</span><span class="n4 on">{@render emIcon(true)}Heat Map</span>
        </div>
      </div>
    </section>
  </main>

  <footer>
    <button class="f1"><svg width="30" height="22" viewBox="0 0 30 22"><circle cx="8" cy="15" r="7" /><circle cx="12" cy="8.500" r="8" /><circle cx="21" cy="8" r="4.500" /><circle cx="23" cy="15" r="7" /><path d="M8 10h15v12H8z" /></svg></button>
    <button class="f2"><svg width="30" height="26" viewBox="0 0 30 26"><path d="M15 0q1.500 0 2 1l12 22q1 3-1 3H2q-2 0-1-3L13 1q.5-1 2-1z" /><path d="M15 8v8M15 18.500v4" stroke="#f4f4f4" stroke-width="4" /></svg></button>
    <button class="f3"><i></i>Memory</button>
  </footer>
</div>

<style>
  :global(body) { overflow: hidden; }
  .window, .window :global(*) { box-sizing: border-box; }
  .window { width: 2554px; height: 1418px; display: flex; flex-direction: column; background: #eee; font: 22px/32px "Noto Sans", "Open Sans", sans-serif; letter-spacing: .15px; color: #000; overflow: hidden; }
  h1, h2, p { margin: 0; font-weight: 400; }
  svg { display: block; flex: none; overflow: visible; }
  i, em { font-style: normal; }
  header { height: 44px; flex: none; display: flex; align-items: center; gap: 16px; padding-left: 10px; background: linear-gradient(#ececec, #d3d3d3); border-top: 1px solid #f7f7f7; border-bottom: 2px solid #b1b1b1; border-radius: 10px 10px 0 0; }
  .light { width: 24px; height: 24px; border-radius: 50%; border: 1px solid #df4744; background: #fc605b; }
  .light.y { background: #fdbc40; border-color: #dd9f33; }
  .light.g { background: #34c84a; border-color: #27a937; }
  h1 { flex: 1; text-align: center; padding-right: 128px; font: 25.5px/42px Inter, sans-serif; letter-spacing: -.05px; color: #4c4c4c; }

  .toolbar { height: 82px; flex: none; display: flex; align-items: center; border-bottom: 2px solid #cfcfcf; }
  .tool { display: flex; align-items: center; justify-content: center; flex: none; height: 80px; }
  .dots { width: 2px; height: 68px; background: repeating-linear-gradient(#808080 0 2px, transparent 2px 6px); }
  .search { margin-left: auto; width: 586px; height: 42px; background: #fff; border: 1.5px solid #b9b9b9; border-radius: 6px; padding: 8px 12px; }
  .help { margin: 0 14px 0 33px; width: 44px; height: 44px; border-radius: 50%; background: #5c98bd; color: #fff; font: bold 38px/44px "DejaVu Sans", sans-serif; text-align: center; }

  main { height: 1229px; flex: none; display: flex; }
  .control { width: 858px; flex: none; position: relative; }
  .ptitle { height: 38px; padding-left: 20px; line-height: 37px; display: flex; justify-content: space-between; letter-spacing: .3px; }
  .control .ptitle { padding-right: 40px; }
  .dock { display: flex; align-items: center; }
  .dock svg:nth-child(2) { margin: 0 13px 0 30px; }
  .frame { background: #e5e5e5; border: 2px solid #e0e0e0; border-radius: 10px; margin-top: 31px; }
  .control .frame { margin-left: 10px; width: 814px; height: 1136px; padding: 0 2px 2px 4px; }
  .tabs { display: flex; height: 40px; margin-top: -27px; font-size: 26px; line-height: 37px; letter-spacing: .2px; border-radius: 8px; }
  .tabs > span { display: flex; align-items: center; justify-content: center; background: #fff; border-top: 2px solid #c9c9c9; border-bottom: 2px solid #aaa; border-right: 2px solid #e0e0e0; box-shadow: 0 1px 1px #0001; }
  .tabs > span:first-child { border-radius: 8px 0 0 8px; border-left: 1px solid #c9c9c9; }
  .tabs > span:last-child { border-radius: 0 8px 8px 0; }
  .tabs > .on { background: linear-gradient(#6cb3fa, #0a7dff); border-color: #4c9ff5 transparent #0565e0 transparent; border-right: 0; color: #fff; text-shadow: 0 2px 1px #0005; }
  .control .tabs { padding-left: 2px; margin-bottom: 18px; }
  .tabs > .back { width: 48px; padding-right: 5px; }
  .t1 { width: 152px; } .t2 { width: 312px; } .t3 { width: 287px; }
  .tabs > .t1 { padding-left: 2px; } .tabs > .t2 { padding-left: 4px; } .tabs > .t3 { padding-left: 5px; }
  .em { margin-right: 8px; margin-top: -2px; }
  .aa { margin-right: 8px; }
  .content { background: #eee; }
  .control .content { height: 1100px; padding-top: 18px; }
  .picker { display: flex; align-items: center; height: 42px; padding-left: 9px; margin-bottom: 20px; }
  .combo { display: flex; justify-content: space-between; height: 34px; background: #fff; border: 1px solid #bbb; border-bottom: 2px solid #aaa; border-radius: 7px; line-height: 31px; padding-left: 22px; letter-spacing: .1px; }
  .combo i { width: 29px; margin: -1px -1px -2px 0; border-radius: 0 7px 7px 0; background: linear-gradient(#6cb3fa, #0a7dff); display: flex; align-items: center; justify-content: center; }
  .combo svg { transform: scale(.78); }
  .combo.big { width: 542px; height: 40px; font-size: 26px; line-height: 36px; padding-left: 24px; letter-spacing: .4px; }
  .combo.big i { width: 33px; }
  .combo.big svg { transform: none; }
  button { display: flex; align-items: center; justify-content: center; padding: 0; background: linear-gradient(#fdfdfd, #f3f3f3); border: 2px solid #b4b4b4; font: inherit; letter-spacing: inherit; color: #000; }
  .b1 { width: 50px; height: 40px; margin-left: 29px; } .b2 { width: 52px; height: 40px; margin-left: 26px; } .b3 { width: 52px; height: 40px; margin-left: 26px; }
  .grid { height: 991px; background: #fff; border: 2px solid #999; border-top-color: #666; padding-top: 2px; display: flex; flex-direction: column; }
  .ghead { display: flex; height: 36px; width: 770px; line-height: 37px; background: #f4f4f4; letter-spacing: .35px; }
  .ghead span { border-right: 2px solid #d4d4d4; height: 33px; margin-top: 3px; line-height: 30px; padding-left: 9px; }
  .ghead .c1 { width: 504px; padding-left: 10px; } .ghead .c2 { width: 132px; display: flex; align-items: center; justify-content: space-between; padding: 0 18px 0 8px; } .ghead .c3 { flex: 1; padding-left: 8px; }
  .gbody { flex: 1; display: flex; min-height: 0; overflow: hidden; }
  .rows { width: 768px; letter-spacing: .38px; }
  .row { height: 32px; display: flex; justify-content: space-between; padding: 0 136px 0 4px; line-height: 32px; }
  .track { width: 30px; border-left: 2px solid #e8e8e8; border-right: 1px solid #e8e8e8; background: #fafafa; padding: 4px 0 0 6px; }
  .thumb { width: 16px; height: 164px; border-radius: 8px; background: #c1c1c1; }
  .status { padding-left: 1px; line-height: 33px; letter-spacing: .6px; }
  .grip { position: absolute; background: #fff; border: 1px solid #ddd; width: 17px; height: 18px; display: flex; align-items: center; justify-content: center; }
  .grip i, .divider i { width: 12px; height: 12px; border-radius: 50%; background: #c8c8c8; border: 1px solid #b8b8b8; }
  .grip.left { right: 1px; top: 605px; }
  .grip.right { left: -1px; top: 484px; }

  .work { width: 1696px; flex: none; }
  .upper { display: flex; height: 986px; }
  .view { width: 1274px; flex: none; border: solid #cfcfcf; border-width: 0 2px; background: #eee; }
  .canvas { position: relative; height: 926px; background: #fff; overflow: hidden; }
  .tiny text { font: 7.9px "Noto Sans", sans-serif; text-anchor: middle; fill: #000; fill-opacity: .76; letter-spacing: 0; }
  .caps text { font-family: "Liberation Sans", sans-serif; letter-spacing: 0; }
  .overview { position: absolute; right: 0; bottom: 0; width: 398px; height: 398px; border: 2px solid #2f87ff; background: #fff; }
  .vbar { height: 60px; display: flex; align-items: center; border-top: 2px solid #cfcfcf; border-bottom: 2px solid #cfcfcf; letter-spacing: .15px; }
  .vbar > span { height: 52px; border-right: 2px solid #d3d3d3; display: flex; align-items: center; flex: none; padding-top: 1px; }
  .tile { width: 38px; height: 38px; border-radius: 7px; background: #000; display: flex; align-items: center; justify-content: center; }
  .tile.net { background: #2f87ff; }
  .s1 { width: 157px; padding-left: 22px; gap: 20px; } .s2 { width: 106px; justify-content: center; padding-left: 4px; }
  .s3 { width: 608px; padding-left: 25px; } .vbar .s4 { width: 108px; justify-content: center; padding-left: 4px; padding-top: 0; }
  .vbar .s5 { width: 108px; height: 30px; padding-left: 13px; gap: 12px; color: #8c8c8c; }
  .s6 { width: 120px; padding-left: 13px; gap: 12px; color: #8c8c8c; }
  .vbar .s7 { flex: 1; border: 0; justify-content: center; padding-top: 0; }

  aside { width: 422px; flex: none; position: relative; }
  aside .ptitle { padding: 0 22px 0 43px; }
  aside .frame { margin-left: 34px; width: 372px; height: 895px; padding: 0 2px 2px 4px; }
  aside .tabs { margin-left: 2px; margin-bottom: 18px; }
  .tabs > .t4 { width: 309px; white-space: nowrap; letter-spacing: .55px; justify-content: flex-start; padding-left: 3px; }
  .t4 .aa { margin-right: 9px; }
  aside .content { height: 859px; padding: 11px 0 0 28px; }
  h2 { font-size: 22px; line-height: 32px; padding-left: 34px; height: 37px; }
  .group { width: 306px; background: #e4e4e4; border: 2px solid #dedede; border-radius: 8px; padding: 6px 26px; }
  .shape { height: 438px; } .label { height: 262px; padding-top: 2px; }
  .lab { margin-top: 24px; height: 36px; }
  .pair { display: flex; justify-content: space-between; height: 32px; }
  .slider { position: relative; margin: 22px 0 26px 26px; width: 198px; height: 6px; background: #b4b4b4; border-radius: 1px; }
  .slider b { position: absolute; top: -9px; margin-left: -12px; width: 23px; height: 24px; border-radius: 50%; background: #fff; box-shadow: 0 1px 3px #0008; }
  .line { display: flex; align-items: center; justify-content: space-between; height: 44px; padding-right: 8px; margin-bottom: 20px; }
  .line.kinds { justify-content: flex-start; height: 48px; padding: 0; margin: 36px 0 20px; }
  .line.second { margin-bottom: 16px; }
  .kinds .oval { width: 51px; height: 48px; margin-left: auto; background: #bbb; border: 2px solid #b0b0b0; display: flex; align-items: center; justify-content: center; }
  .kinds .more { margin-left: 8px; }
  .swatch { width: 90px; height: 44px; background: #f8f8f8; border: 2px solid #b4b4b4; display: flex; align-items: center; justify-content: center; flex: none; }
  .swatch i { width: 90px; height: 34px; flex: none; border: 2px solid #000; }
  .cream { background: #ffffbf; } .slate { background: #404040; } .ink { background: #000; }
  .swatch.wide { width: 114px; }
  .check { display: flex; align-items: center; height: 32px; padding-left: 14px; gap: 12px; letter-spacing: .3px; }
  .check.top { margin: 36px 0 14px; } .line.font { margin-bottom: 16px; }
  .box { display: block; width: 24px; height: 24px; flex: none; border-radius: 5px; background: #fff; border: 1.5px solid #b8b8b8; }
  .box.ticked { background: #3b99fc; border: 0; }

  .divider { height: 17px; background: linear-gradient(#fff, #f9f9f9); display: flex; align-items: center; justify-content: center; }
  .divider i { display: block; }
  .tables .ptitle { padding: 2px 22px 0 26px; height: 40px; }
  .tframe { margin: 11px 0 0 15px; width: 1665px; height: 134px; background: #e5e5e5; border: 2px solid #dcdcdc; border-radius: 9px; padding: 20px 2px 0 5px; }
  .opts { display: flex; align-items: center; height: 44px; padding-left: 360px; letter-spacing: .05px; }
  .opts > span { padding-top: 1px; }
  .l1 { width: 83px; } .l2 { width: 149px; } .l3 { width: 127px; }
  .opts > :global(.w1) { width: 224px; margin-right: 17px; } .opts > :global(.w2) { width: 199px; margin-right: 18px; } .opts > :global(.w3) { width: 264px; margin-right: 31px; }
  .l4 { margin-left: 12px; }
  .opts button { width: 50px; height: 40px; margin: -2px 3px 0 auto; }
  .heat { margin-top: 8px; display: flex; height: 33px; width: 1654px; overflow: hidden; background: linear-gradient(#f4f4f4, #f4f4f4) 2px 2px/1616px 28px no-repeat #fff; border: 2px solid #999; border-top: 3px solid #666; }
  .heat span { border-right: 2px solid #d3d3d3; height: 24px; margin-top: 6px; }
  .h1 { width: 152px; } .h2 { width: 150px; }
  .h3 { width: 200px; padding: 10px 16px 0; } .h3 i { display: block; height: 40px; background: #fafafa; border: 2px solid #aaa; }
  .heat .h4 { width: 31px; height: 30px; margin-top: 1px; background: linear-gradient(#a6cee3 11px, #eaeaea 11px); }
  .tabs.bottom { width: 791px; margin: -10px 0 0 453px; }
  .n1 { width: 182px; } .n3 { width: 228px; } .n4 { width: 199px; }

  footer { height: 63px; flex: none; display: flex; border-top: 2px solid #cfcfcf; background: linear-gradient(#ececec, #dcdcdc); padding-left: 14px; }
  footer button { height: 40px; margin-top: 13px; }
  .f1 { width: 58px; } .f2 { width: 56px; margin-left: 28px; }
  footer .f3 { width: 150px; height: 47px; margin: 10px 20px 0 auto; gap: 10px; letter-spacing: .2px; }
  .f3 i { width: 24px; height: 24px; border-radius: 50%; background: #0a8a35; }
</style>
